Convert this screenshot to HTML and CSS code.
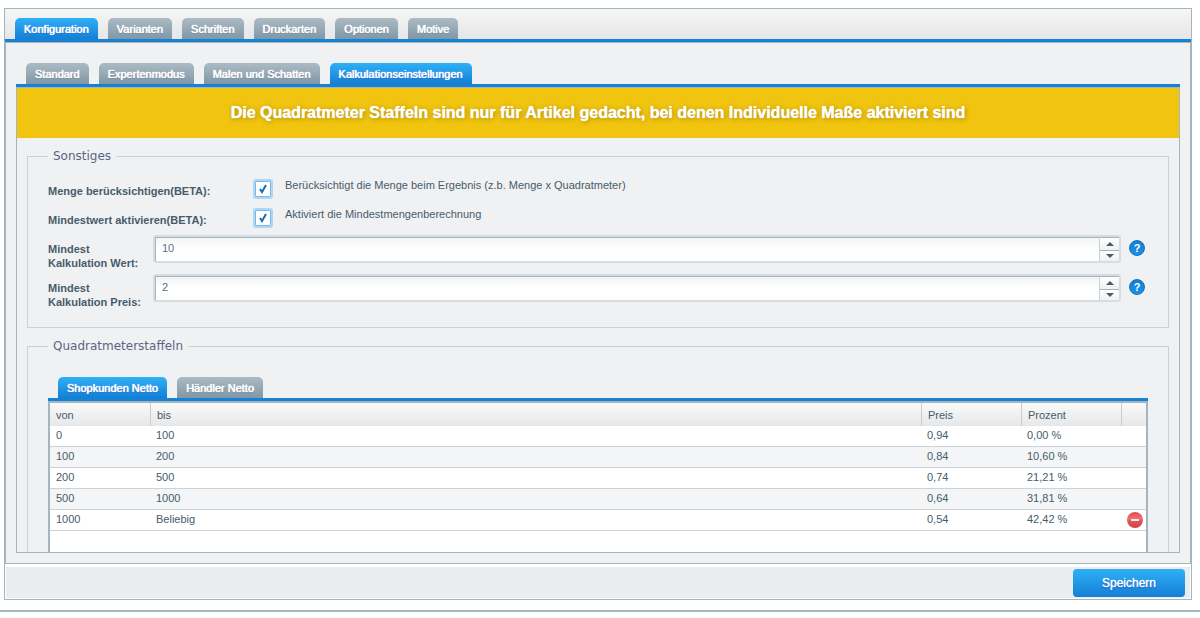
FILE: index.html
```html
<!DOCTYPE html>
<html lang="de">
<head>
<meta charset="utf-8">
<title>Konfiguration</title>
<link rel="stylesheet" href="styles.css">
</head>
<body>
<div class="window">
  <nav class="tabs tabs-main">
    <button class="tab active" type="button">Konfiguration</button>
    <button class="tab" type="button">Varianten</button>
    <button class="tab" type="button">Schriften</button>
    <button class="tab" type="button">Druckarten</button>
    <button class="tab" type="button">Optionen</button>
    <button class="tab" type="button">Motive</button>
  </nav>
  <main class="content">
    <nav class="tabs tabs-sub">
      <button class="tab" type="button">Standard</button>
      <button class="tab" type="button">Expertenmodus</button>
      <button class="tab" type="button">Malen und Schatten</button>
      <button class="tab active" type="button">Kalkulationseinstellungen</button>
    </nav>
    <div class="panel">
      <h1 class="banner">Die Quadratmeter Staffeln sind nur für Artikel gedacht, bei denen Individuelle Maße aktiviert sind</h1>
      <fieldset class="group">
        <legend>Sonstiges</legend>
        <div class="check-row">
          <label for="menge">Menge berücksichtigen(BETA):</label>
          <input id="menge" class="check" type="checkbox" checked aria-describedby="menge-text">
          <span id="menge-text" class="hint">Berücksichtigt die Menge beim Ergebnis (z.b. Menge x Quadratmeter)</span>
        </div>
        <div class="check-row">
          <label for="mindest">Mindestwert aktivieren(BETA):</label>
          <input id="mindest" class="check" type="checkbox" checked aria-describedby="mindest-text">
          <span id="mindest-text" class="hint">Aktiviert die Mindestmengenberechnung</span>
        </div>
        <div class="field-row">
          <label for="wert">Mindest<br>Kalkulation Wert:</label>
          <div class="spinner">
            <input id="wert" type="text" inputmode="decimal" value="10">
            <div class="steps">
              <button type="button" aria-label="Wert erhöhen"><svg width="8" height="4" viewBox="0 0 8 4"><path d="M0 4L4 0L8 4Z"/></svg></button>
              <button type="button" aria-label="Wert verringern"><svg width="8" height="4" viewBox="0 0 8 4"><path d="M0 0L4 4L8 0Z"/></svg></button>
            </div>
          </div>
          <button class="help" type="button">?</button>
        </div>
        <div class="field-row">
          <label for="preis">Mindest<br>Kalkulation Preis:</label>
          <div class="spinner">
            <input id="preis" type="text" inputmode="decimal" value="2">
            <div class="steps">
              <button type="button" aria-label="Preis erhöhen"><svg width="8" height="4" viewBox="0 0 8 4"><path d="M0 4L4 0L8 4Z"/></svg></button>
              <button type="button" aria-label="Preis verringern"><svg width="8" height="4" viewBox="0 0 8 4"><path d="M0 0L4 4L8 0Z"/></svg></button>
            </div>
          </div>
          <button class="help" type="button">?</button>
        </div>
      </fieldset>
      <fieldset class="group group-scale">
        <legend>Quadratmeterstaffeln</legend>
        <nav class="tabs tabs-grid">
          <button class="tab active" type="button">Shopkunden Netto</button>
          <button class="tab" type="button">Händler Netto</button>
        </nav>
        <div class="grid">
          <table>
            <colgroup><col class="c-from"><col><col class="c-num"><col class="c-num"><col class="c-act"></colgroup>
            <thead><tr><th>von</th><th>bis</th><th>Preis</th><th>Prozent</th><th></th></tr></thead>
            <tbody>
              <tr><td>0</td><td>100</td><td>0,94</td><td>0,00 %</td><td></td></tr>
              <tr><td>100</td><td>200</td><td>0,84</td><td>10,60 %</td><td></td></tr>
              <tr><td>200</td><td>500</td><td>0,74</td><td>21,21 %</td><td></td></tr>
              <tr><td>500</td><td>1000</td><td>0,64</td><td>31,81 %</td><td></td></tr>
              <tr><td>1000</td><td>Beliebig</td><td>0,54</td><td>42,42 %</td><td class="action"><button class="remove" type="button" aria-label="Zeile löschen"><svg width="16" height="16" viewBox="0 0 16 16"><defs><linearGradient id="red" x1="0" y1="0" x2="0" y2="1"><stop offset="0" stop-color="#dc4f51"/><stop offset=".45" stop-color="#ee7173"/><stop offset=".55" stop-color="#e25558"/><stop offset="1" stop-color="#cf4144"/></linearGradient></defs><circle cx="8" cy="8" r="8" fill="url(#red)"/><path d="M4 7h8v2H4z" fill="#f6e6e6"/></svg></button></td></tr>
            </tbody>
          </table>
        </div>
      </fieldset>
    </div>
  </main>
  <footer class="footer">
    <button class="save" type="button">Speichern</button>
  </footer>
</div>
</body>
</html>
```
FILE: styles.css
```css
* { box-sizing: border-box; }

body {
  margin: 0;
  height: 100vh;
  padding: 8px 8px 6px 4px;
  display: flex;
  flex-direction: column;
  background: #fff;
  color: #475c6a;
  font: 11px/13px "Liberation Sans", Arial, sans-serif;
}

body::after {
  content: "";
  height: 2px;
  margin: 10px -8px 0 -4px;
  background: #a4b5c0;
}

button, input { font: inherit; }
button { cursor: pointer; }

.window {
  flex: 1;
  min-height: 0;
  display: flex;
  flex-direction: column;
  border: 1px solid #a4b5c0;
}

.tabs {
  display: flex;
  gap: 10px;
  padding: 0 10px;
  border-bottom: 3px solid #1582d6;
}

.tabs-main {
  padding-top: 9px;
  background: linear-gradient(#f5f6f6, #e6e6e8);
}

.tab {
  height: 21px;
  padding: 2px 9px 0;
  border: 0;
  border-radius: 5px 5px 0 0;
  background: linear-gradient(#acbbc4, #8097a6);
  color: #fff;
  text-shadow: 0 0 1px #fff, 0 0 1px #fff, 0 1px 1px #5f7685;
}

.tab.active {
  background: linear-gradient(#2eb0f8, #157fd4);
  text-shadow: 0 0 1px #fff, 0 0 1px #fff, 0 1px 1px #0a4fc0;
}

.content {
  flex: 1;
  min-height: 0;
  display: flex;
  flex-direction: column;
  padding: 20px 10px 10px;
  border: 1px solid #a4b5c0;
  background: #f0f1f3;
}

.panel {
  flex: 1;
  min-height: 0;
  overflow: hidden;
  border: 1px solid #a4b5c0;
}

.banner {
  margin: 0 0 11px;
  padding: 15px 10px;
  background: #f1c40f;
  color: #fff;
  font-size: 16px;
  line-height: 20px;
  font-weight: bold;
  text-align: center;
  text-shadow: 0 0 1px #fff, 1px 1px 5px #a08005;
}

.group {
  min-width: 0;
  margin: 0 10px 11px;
  padding: 16px 20px 14px;
  border: 1px solid #cbd0d5;
}

.group legend {
  padding: 0 5px;
  color: #5c6584;
  font: 12px/14px "DejaVu Sans", Verdana, sans-serif;
}

.group label { font-weight: bold; }

.check-row {
  display: grid;
  grid-template-columns: 206px 18px 1fr;
  height: 27px;
}

.check-row + .check-row { margin-top: 2px; }

.check-row label {
  padding-top: 6px;
  white-space: nowrap;
}

.check {
  appearance: none;
  width: 16px;
  height: 16px;
  margin: 2px 1px;
  border: 1px solid #79b9ea;
  border-radius: 1px;
  outline: 2px solid #acd7f7;
  background: #fff;
}

.check:checked {
  background: #fff url("data:image/svg+xml,%3Csvg xmlns='http://www.w3.org/2000/svg' width='8' height='10' viewBox='0 0 8 10'%3E%3Cpath d='M1 5L3 8L7 1' fill='none' stroke='%23156fb5' stroke-width='2'/%3E%3C/svg%3E") center no-repeat;
}

.hint { padding-left: 13px; }

.field-row {
  display: grid;
  grid-template-columns: 105px 1fr 16px;
  height: 39px;
  margin-right: 3px;
}

.field-row label {
  padding-top: 7px;
  line-height: 14px;
}

.spinner {
  display: flex;
  height: 28px;
  margin-right: 8px;
  border: 2px solid #d7dce1;
  border-radius: 3px;
  background: #fff;
}

.spinner input {
  flex: 1;
  min-width: 0;
  padding: 0 6px 2px;
  border: 1px solid #a4b5c0;
  border-width: 1px 0 0 1px;
  background: linear-gradient(#f3f5f5, #fff 12px);
  color: #5d7284;
}

.steps {
  width: 20px;
  display: grid;
  grid-template-rows: 1fr 1fr;
  border-top: 1px solid #a4b5c0;
  border-left: 1px solid #c9d0d6;
}

.steps button {
  display: grid;
  place-items: center;
  padding: 0;
  border: 0;
  background: linear-gradient(#fff, #eff1f2);
}

.steps button + button { border-top: 1px solid #a4b5c0; }
.steps svg { fill: #475c6a; }

.help {
  width: 16px;
  height: 16px;
  margin-top: 5px;
  padding: 0;
  border: 1px solid #1272bd;
  border-radius: 50%;
  background: linear-gradient(#1280d0, #1b91e5);
  color: #fff;
  font-weight: bold;
  line-height: 14px;
}

.group-scale { padding-top: 24px; }

.grid {
  min-height: 300px;
  border: 2px solid #a4b5c0;
  background: #fff;
}

.grid table {
  width: 100%;
  table-layout: fixed;
  border-collapse: separate;
  border-spacing: 0;
}

.c-from, .c-num { width: 100px; }
.c-act { width: 25px; }

.grid th {
  height: 23px;
  padding: 2px 6px 0;
  border-left: 1px solid #c9ced3;
  background: linear-gradient(#fafafa, #e6e7e9);
  font-weight: normal;
  text-align: left;
}

.grid th:first-child { border-left: 0; }

.grid td {
  height: 21px;
  padding: 0 6px 2px;
  border-bottom: 1px solid #cbd3d9;
}

.grid tbody tr:nth-child(even) { background: #f3f5f6; }

.grid .action { padding: 0 3px; }

.remove {
  display: block;
  width: 16px;
  height: 16px;
  margin-left: auto;
  padding: 0;
  border: 0;
  background: none;
}

.remove svg { display: block; }

.footer {
  display: flex;
  justify-content: flex-end;
  padding: 2px 5px 1px;
  border: 1px solid #fff;
  border-top-width: 3px;
  background: #ebecee;
}

.save {
  width: 112px;
  height: 28px;
  border: 0;
  border-radius: 4px;
  background: linear-gradient(#2eb0f8, #157fd4);
  color: #fff;
  font-size: 12px;
  text-shadow: 0 0 1px #fff, 0 1px 2px #0a4fc0;
}
```
